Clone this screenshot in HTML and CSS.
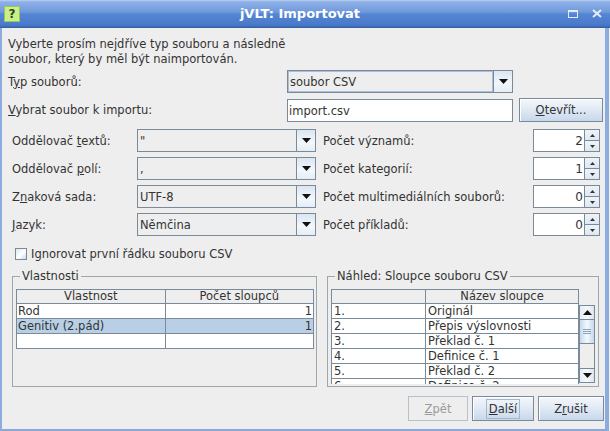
FILE: index.html
```html
<!DOCTYPE html>
<html lang="cs">
<head>
<meta charset="utf-8">
<title>jVLT: Importovat</title>
<link rel="stylesheet" href="styles.css">
</head>
<body>
<div class="window">
  <header class="titlebar">
    <span class="app-icon">?</span>
    <span class="title">jVLT: Importovat</span>
    <span class="wm-controls">
      <svg class="wm-max" width="10" height="8" viewBox="0 0 10 8"><rect x="0.5" y="0.5" width="9" height="7" fill="none" stroke="#e4ecf8"/><line x1="0" y1="1.5" x2="10" y2="1.5" stroke="#e4ecf8"/></svg>
      <svg class="wm-close" width="10" height="9" viewBox="0 0 10 9"><path d="M1 1 L9 8 M9 1 L1 8" stroke="#e4ecf8" stroke-width="2"/></svg>
    </span>
  </header>
  <main class="frame">
    <p class="intro">Vyberte prosím nejdříve typ souboru a následně<br>soubor, který by měl být naimportován.</p>

    <div class="file-grid">
      <span class="lbl">T<u>y</u>p souborů:</span>
      <div class="combo focused"><span class="combo-value">soubor CSV</span><span class="combo-arrow"><svg width="9" height="5" viewBox="0 0 9 5"><polygon points="0,0 9,0 4.5,5" fill="#111"/></svg></span></div>
      <span></span>
      <span class="lbl"><u>V</u>ybrat soubor k importu:</span>
      <div class="textfield">import.csv</div>
      <button class="btn btn-open"><u>O</u>tevřít...</button>
    </div>

    <div class="options-grid">
      <span class="lbl">Oddělovač <u>t</u>extů:</span>
      <div class="combo"><span class="combo-value">"</span><span class="combo-arrow"><svg width="9" height="5" viewBox="0 0 9 5"><polygon points="0,0 9,0 4.5,5" fill="#111"/></svg></span></div>
      <span class="lbl rlbl">Počet významů:</span>
      <div class="spinner"><span class="spin-value">2</span><span class="spin-buttons"><span class="spin-btn"><svg width="5" height="3" viewBox="0 0 5 3"><polygon points="2.5,0 5,3 0,3" fill="#333"/></svg></span><span class="spin-btn"><svg width="5" height="3" viewBox="0 0 5 3"><polygon points="0,0 5,0 2.5,3" fill="#333"/></svg></span></span></div>

      <span class="lbl">Oddělovač <u>p</u>olí:</span>
      <div class="combo"><span class="combo-value">,</span><span class="combo-arrow"><svg width="9" height="5" viewBox="0 0 9 5"><polygon points="0,0 9,0 4.5,5" fill="#111"/></svg></span></div>
      <span class="lbl rlbl">Počet kategorií:</span>
      <div class="spinner"><span class="spin-value">1</span><span class="spin-buttons"><span class="spin-btn"><svg width="5" height="3" viewBox="0 0 5 3"><polygon points="2.5,0 5,3 0,3" fill="#333"/></svg></span><span class="spin-btn"><svg width="5" height="3" viewBox="0 0 5 3"><polygon points="0,0 5,0 2.5,3" fill="#333"/></svg></span></span></div>

      <span class="lbl">Z<u>n</u>aková sada:</span>
      <div class="combo"><span class="combo-value">UTF-8</span><span class="combo-arrow"><svg width="9" height="5" viewBox="0 0 9 5"><polygon points="0,0 9,0 4.5,5" fill="#111"/></svg></span></div>
      <span class="lbl rlbl">Počet multimediálních souborů:</span>
      <div class="spinner"><span class="spin-value">0</span><span class="spin-buttons"><span class="spin-btn"><svg width="5" height="3" viewBox="0 0 5 3"><polygon points="2.5,0 5,3 0,3" fill="#333"/></svg></span><span class="spin-btn"><svg width="5" height="3" viewBox="0 0 5 3"><polygon points="0,0 5,0 2.5,3" fill="#333"/></svg></span></span></div>

      <span class="lbl"><u>J</u>azyk:</span>
      <div class="combo"><span class="combo-value">Němčina</span><span class="combo-arrow"><svg width="9" height="5" viewBox="0 0 9 5"><polygon points="0,0 9,0 4.5,5" fill="#111"/></svg></span></div>
      <span class="lbl rlbl">Počet příkladů:</span>
      <div class="spinner"><span class="spin-value">0</span><span class="spin-buttons"><span class="spin-btn"><svg width="5" height="3" viewBox="0 0 5 3"><polygon points="2.5,0 5,3 0,3" fill="#333"/></svg></span><span class="spin-btn"><svg width="5" height="3" viewBox="0 0 5 3"><polygon points="0,0 5,0 2.5,3" fill="#333"/></svg></span></span></div>
    </div>

    <label class="checkbox"><span class="box"></span>Ignorovat první řádku souboru CSV</label>

    <div class="groups">
      <fieldset class="group group-left">
        <legend>Vlastnosti</legend>
        <table class="grid props">
          <thead><tr><th>Vlastnost</th><th>Počet sloupců</th></tr></thead>
          <tbody>
            <tr><td>Rod</td><td class="num">1</td></tr>
            <tr class="selected"><td>Genitiv (2.pád)</td><td class="num">1</td></tr>
            <tr><td></td><td></td></tr>
          </tbody>
        </table>
      </fieldset>
      <fieldset class="group group-right">
        <legend>Náhled: Sloupce souboru CSV</legend>
        <div class="preview">
          <div class="preview-viewport">
            <table class="grid cols">
              <thead><tr><th></th><th>Název sloupce</th></tr></thead>
              <tbody>
                <tr><td>1.</td><td>Originál</td></tr>
                <tr><td>2.</td><td>Přepis výslovnosti</td></tr>
                <tr><td>3.</td><td>Překlad č. 1</td></tr>
                <tr><td>4.</td><td>Definice č. 1</td></tr>
                <tr><td>5.</td><td>Překlad č. 2</td></tr>
                <tr><td>6.</td><td>Definice č. 2</td></tr>
              </tbody>
            </table>
          </div>
          <div class="scrollbar">
            <span class="sb-btn"><svg width="9" height="5" viewBox="0 0 9 5"><polygon points="4.5,0 9,5 0,5" fill="#111"/></svg></span>
            <span class="sb-thumb"><i></i><i></i><i></i></span>
            <span class="sb-track"></span>
            <span class="sb-btn"><svg width="9" height="5" viewBox="0 0 9 5"><polygon points="0,0 9,0 4.5,5" fill="#111"/></svg></span>
          </div>
        </div>
      </fieldset>
    </div>

    <div class="buttons">
      <button class="btn btn-back" disabled><u>Z</u>pět</button>
      <button class="btn btn-next"><span class="focus"><u>D</u>alší</span></button>
      <button class="btn btn-cancel">Z<u>r</u>ušit</button>
    </div>
  </main>
</div>
</body>
</html>
```

FILE: styles.css
```css
html, body {
  margin: 0;
  padding: 0;
  background: #eeeeee;
}
body {
  font-family: "DejaVu Sans", sans-serif;
  font-size: 11.5px;
  color: #333333;
}
u {
  text-decoration: underline;
  text-underline-offset: 1px;
}
.window {
  width: 610px;
  height: 431px;
  display: flex;
  flex-direction: column;
  overflow: hidden;
}

/* title bar */
.titlebar {
  height: 28px;
  flex: none;
  box-sizing: border-box;
  display: flex;
  align-items: center;
  background: linear-gradient(to bottom, #b9d0f4 0px, #8eb0e6 2px, #7099dc 12px, #5486d3 14px, #4a7bcc 24px, #3f6cba 27px);
  border-bottom: 1px solid #37609f;
}
.app-icon {
  width: 16px;
  height: 16px;
  flex: none;
  box-sizing: border-box;
  margin-left: 4px;
  margin-top: 1px;
  border: 1px solid #9cc35c;
  background: #c8f08a;
  color: #34451a;
  font-weight: bold;
  font-size: 12px;
  line-height: 14px;
  text-align: center;
}
.title {
  flex: 1;
  text-align: center;
  padding-left: 12px;
  color: #ffffff;
  font-weight: bold;
  font-size: 13px;
}
.wm-controls {
  margin-right: 8px;
  display: flex;
  align-items: center;
  gap: 14px;
}

/* frame */
.frame {
  flex: 1;
  min-height: 0;
  display: flex;
  flex-direction: column;
  border-left: 2px solid #8cacdf;
  border-right: 4px solid #8cacdf;
  border-bottom: 2px solid #8aa7d6;
  margin-right: 1px;
  padding: 9px 1px 0 6px;
}
.intro {
  margin: 0;
  line-height: 15px;
}
.lbl {
  white-space: nowrap;
}

/* combos, fields, buttons */
.combo {
  display: flex;
  height: 23px;
  box-sizing: border-box;
  border: 1px solid #7a8a99;
  background: #eeeeee;
}
.combo-value {
  flex: 1;
  display: flex;
  align-items: center;
  padding-left: 2px;
  white-space: nowrap;
}
.combo.focused .combo-value {
  box-shadow: inset 0 0 0 1px #a9c0da;
}
.combo-arrow {
  width: 18px;
  flex: none;
  border-left: 1px solid #7a8a99;
  display: flex;
  align-items: center;
  justify-content: center;
  background: linear-gradient(to bottom, #dbe6f2, #f3f7fb 60%, #e4ecf5);
}
.textfield {
  height: 23px;
  box-sizing: border-box;
  border: 1px solid #7a8a99;
  background: #ffffff;
  display: flex;
  align-items: center;
  padding-left: 1px;
}
.btn {
  font: inherit;
  color: #333333;
  height: 24px;
  box-sizing: border-box;
  border: 1px solid #7a8a99;
  box-shadow: inset 1px 1px 0 #ffffff;
  background: linear-gradient(to bottom, #f4f7fb 0%, #e4ecf6 40%, #c7d8eb 100%);
  padding: 0;
  display: flex;
  align-items: center;
  justify-content: center;
}
.btn[disabled] {
  color: #9a9a9a;
  border-color: #b8c0c8;
  background: #eeeeee;
  box-shadow: none;
}

/* top grid */
.file-grid {
  margin-top: 3px;
  display: grid;
  grid-template-columns: 279px 226px 90px;
  grid-template-rows: 23px 24px;
  row-gap: 5px;
  align-items: center;
}
.btn-open {
  justify-self: end;
  width: 84px;
}
.file-grid .textfield {
  align-self: end;
}

/* options grid */
.options-grid {
  margin-top: 7px;
  margin-left: 4px;
  display: grid;
  grid-template-columns: 125px 179px 217px 67px;
  grid-auto-rows: 23px;
  row-gap: 5px;
  align-items: center;
}
.rlbl {
  padding-left: 7px;
}
.spinner {
  display: flex;
  height: 23px;
  box-sizing: border-box;
}
.spin-value {
  flex: 1;
  border: 1px solid #7a8a99;
  border-right: none;
  background: #ffffff;
  display: flex;
  align-items: center;
  justify-content: flex-end;
  padding-right: 1px;
  font-size: 12px;
}
.spin-buttons {
  width: 16px;
  display: flex;
  flex-direction: column;
}
.spin-btn {
  flex: 1;
  box-sizing: border-box;
  border: 1px solid #7a8a99;
  background: linear-gradient(to bottom, #eef3f9, #dfe8f2);
  display: flex;
  align-items: center;
  justify-content: center;
}
.spin-btn + .spin-btn {
  border-top: none;
}

/* checkbox */
.checkbox {
  margin-top: 11px;
  margin-left: 7px;
  display: flex;
  align-items: center;
  gap: 4px;
  height: 13px;
}
.box {
  width: 12px;
  height: 12px;
  box-sizing: border-box;
  border: 1px solid #7a8a99;
  background: linear-gradient(135deg, #dce7f3, #ffffff 55%, #c6d8ea);
}

/* groups */
.groups {
  margin-top: 10px;
  margin-left: 4px;
  display: flex;
  gap: 10px;
}
.group {
  margin: 0;
  padding: 6px 2px 0 3px;
  border: 1px solid #9ea6ae;
  box-sizing: border-box;
  height: 117px;
  min-width: 0;
}
.group legend {
  margin-left: 4px;
  padding: 0 2px;
  line-height: 13px;
}
.group-left {
  width: 305px;
}
.group-right {
  width: 272px;
}

.grid {
  border-collapse: collapse;
  table-layout: fixed;
  width: 298px;
}
.grid th, .grid td {
  padding: 0 1px;
  white-space: nowrap;
  overflow: hidden;
  font-weight: normal;
  box-sizing: border-box;
}
.grid th {
  height: 14px;
  line-height: 13px;
  text-align: center;
  background: #eeeeee;
  border: 1px solid #7a8a99;
}
.grid td {
  height: 15px;
  line-height: 14px;
  background: #ffffff;
  border: 1px solid #7a8a99;
  border-top: none;
}
.grid td.num {
  text-align: right;
}
.grid tr.selected td {
  background: #b8cfe5;
}

.preview {
  display: flex;
  height: 95px;
}
.preview-viewport {
  width: 248px;
  overflow: hidden;
}
.cols {
  width: 248px;
}
.cols th:first-child, .cols td:first-child {
  width: 94px;
}
.cols td {
  padding-left: 2px;
}
.scrollbar {
  width: 16px;
  margin-top: 16px;
  height: 78px;
  display: flex;
  flex-direction: column;
  box-sizing: border-box;
  border: 1px solid #7a8a99;
  border-left: none;
}
.sb-btn {
  height: 14px;
  flex: none;
  box-sizing: border-box;
  border-left: 1px solid #7a8a99;
  background: linear-gradient(to right, #e6edf5, #f6f9fc 50%, #dbe5f0);
  display: flex;
  align-items: center;
  justify-content: center;
}
.sb-btn:first-child {
  border-bottom: 1px solid #7a8a99;
}
.sb-btn:last-child {
  border-top: 1px solid #7a8a99;
}
.sb-thumb {
  height: 24px;
  flex: none;
  box-sizing: border-box;
  border: 1px solid #7a8a99;
  border-right: none;
  border-top: none;
  background: linear-gradient(to right, #c5d8ec, #f4f8fc 50%, #c5d8ec);
  display: flex;
  flex-direction: column;
  align-items: center;
  justify-content: center;
  gap: 1px;
}
.sb-thumb i {
  width: 8px;
  height: 1px;
  background: #8aa6c6;
}
.sb-track {
  flex: 1;
  border-left: 1px solid #7a8a99;
  background: #eeeeee;
}

/* bottom buttons */
.buttons {
  margin-top: 9px;
  display: flex;
  justify-content: flex-end;
  gap: 4px;
}
.buttons .btn {
  height: 25px;
}
.btn-back { width: 60px; }
.btn-next { width: 62px; }
.btn-cancel { width: 66px; }
.focus {
  padding: 2px 2px;
  outline: 1px solid #a3b8cc;
}
```
